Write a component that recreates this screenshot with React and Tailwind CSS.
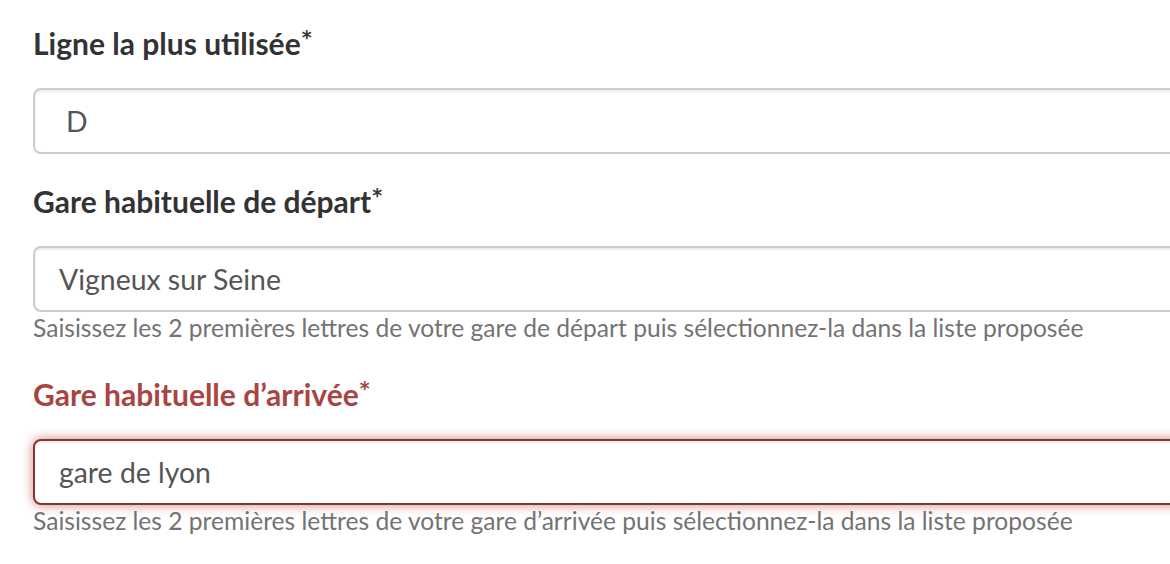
import React from "react";

const font = { fontFamily: "Lato, 'Open Sans', sans-serif" };

function Label({ children, error }) {
  return (
    <div
      className={`h-[36px] text-[30px] font-bold leading-[36px] whitespace-nowrap ${error ? "text-[#a94442]" : "text-[#333333]"}`}
    >
      {children}
      <span
        className="relative -top-[11px] ml-[1px] text-[19px] font-bold"
        style={{ fontFamily: "'DejaVu Sans', sans-serif" }}
      >
        *
      </span>
    </div>
  );
}

const inputBase =
  "h-[66px] w-[1200px] rounded-[8px] border-2 bg-white flex items-center text-[28.4px] text-[#555555] whitespace-nowrap";

export default function App() {
  return (
    <div
      className="w-[1170px] h-[564px] overflow-hidden bg-white pl-[33px]"
      style={font}
    >
      <div className="pt-[25px]">
        <Label>Ligne la plus utilisée</Label>
        <div className={`${inputBase} mt-[27px] border-[#cccccc] pl-[31px] shadow-[inset_0_2px_2px_rgba(0,0,0,0.075)]`}>
          D
        </div>
      </div>
      <div className="pt-[29px]">
        <Label>Gare habituelle de départ</Label>
        <div className={`${inputBase} mt-[27px] border-[#cccccc] pl-[24px] shadow-[inset_0_2px_2px_rgba(0,0,0,0.075)]`}>
          Vigneux sur Seine
        </div>
        <div className="mt-[1px] h-[30px] text-[24.6px] leading-[30px] text-[#737373] whitespace-nowrap">
          Saisissez les 2 premières lettres de votre gare de départ puis sélectionnez-la dans la liste proposée
        </div>
      </div>
      <div className="pt-[33px]">
        <Label error>Gare habituelle d’arrivée</Label>
        <div className={`${inputBase} mt-[27px] border-[#843534] pl-[24px] shadow-[inset_0_2px_2px_rgba(0,0,0,0.075),0_0_12px_#ce8483]`}>
          gare de lyon
        </div>
        <div className="mt-[1px] h-[30px] text-[24.6px] leading-[30px] text-[#737373] whitespace-nowrap">
          Saisissez les 2 premières lettres de votre gare d’arrivée puis sélectionnez-la dans la liste proposée
        </div>
      </div>
    </div>
  );
}
